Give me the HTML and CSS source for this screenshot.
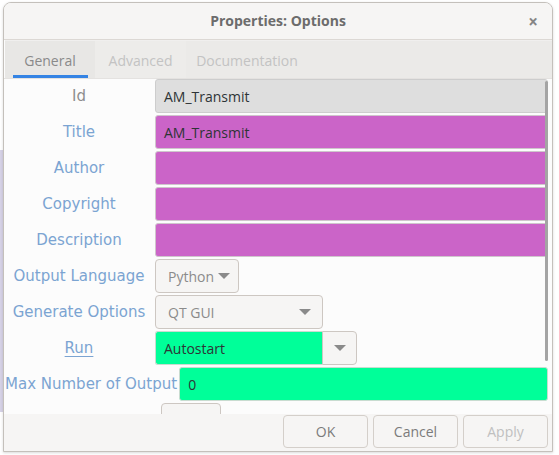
FILE: index.html
```html
<!DOCTYPE html>
<html>
<head>
<meta charset="utf-8">
<link rel="stylesheet" href="styles.css">
</head>
<body>
<div class="backdrop-strip"></div>
<div class="window">
  <div class="header">
    <div class="title">Properties: Options</div>
    <div class="close">×</div>
  </div>
  <div class="tabs">
    <div class="tab active">General</div>
    <div class="tab tab2">Advanced</div>
    <div class="tab">Documentation</div>
  </div>
  <div class="content">
    <div class="row"><div class="label grey">Id</div><div class="field idf">AM_Transmit</div></div>
    <div class="row"><div class="label">Title</div><div class="field mag">AM_Transmit</div></div>
    <div class="row"><div class="label">Author</div><div class="field mag"></div></div>
    <div class="row"><div class="label">Copyright</div><div class="field mag"></div></div>
    <div class="row"><div class="label">Description</div><div class="field mag"></div></div>
    <div class="row"><div class="label">Output Language</div><div class="combo lang">Python<span class="arrow"></span></div></div>
    <div class="row"><div class="label">Generate Options</div><div class="combo gen"><span>QT GUI</span><span class="arrow"></span></div></div>
    <div class="row"><div class="label"><u>Run</u></div><div class="run"><div class="field green runf">Autostart</div><div class="runbtn"><span class="arrow"></span></div></div></div>
    <div class="row"><div class="label wide">Max Number of Output</div><div class="field green">0</div></div>
    <div class="row"><div class="label"></div><div class="combo small"></div></div>
    <div class="scrollbar"></div>
  </div>
  <div class="footer">
    <div class="btn">OK</div>
    <div class="btn">Cancel</div>
    <div class="btn disabled">Apply</div>
  </div>
</div>
</body>
</html>
```
FILE: styles.css
```css
html, body {
  margin: 0;
  padding: 0;
  background: #ffffff;
  width: 559px;
  height: 455px;
  overflow: hidden;
}
body {
  position: relative;
  font-family: "Open Sans", "Noto Sans", sans-serif;
}
.backdrop-strip {
  position: absolute;
  left: 0;
  top: 150px;
  width: 3px;
  height: 262px;
  background: #d6d2e6;
}
.window {
  position: absolute;
  left: 3px;
  top: 2px;
  width: 548px;
  height: 448px;
  border: 1px solid #c4c0bb;
  border-radius: 8px 8px 0 0;
  background: #fcfcfc;
  display: flex;
  flex-direction: column;
  overflow: hidden;
  box-shadow: 0 1px 3px rgba(0,0,0,0.15);
}
.header {
  height: 36px;
  flex: none;
  background: #f6f5f4;
  border-bottom: 1px solid #dcd8d4;
  display: flex;
  align-items: center;
  justify-content: center;
  position: relative;
}
.title {
  font-weight: bold;
  font-size: 14px;
  color: #6c6c6c;
  margin-top: -1px;
}
.close {
  position: absolute;
  right: 14px;
  top: 7px;
  font-size: 17px;
  color: #858585;
  font-weight: bold;
}
.tabs {
  height: 37px;
  flex: none;
  background: #ebeae8;
  display: flex;
  margin-left: 1px;
  border-top: 1px solid #f0efee;
}
.tab {
  width: 90px;
  display: flex;
  align-items: center;
  justify-content: center;
  font-size: 14px;
  color: #c3c3c3;
  box-sizing: border-box;
  padding-top: 1px;
}
.tab:nth-child(3) { width: 122px; }
.tab.active {
  color: #8a8a8a;
  background: #e8e7e5;
  position: relative;
}
.tab.active::after {
  content: "";
  position: absolute;
  left: 8px;
  right: 7px;
  bottom: 0;
  height: 3px;
  background: #3584e4;
}
.tab2 { background: #edecea; width: 91px; }
.content {
  flex: 1;
  position: relative;
  background: #fcfcfc;
  padding: 0 4px 0 1px;
  display: flex;
  flex-direction: column;
  gap: 2px;
  overflow: hidden;
  border-top: 1px solid #e4e2e0;
}
.row {
  display: flex;
  gap: 2px;
  height: 34px;
  flex: none;
  align-items: stretch;
}
.label {
  width: 148px;
  flex: none;
  display: flex;
  align-items: center;
  justify-content: center;
  font-family: "DejaVu Sans", sans-serif;
  font-size: 15px;
  color: #7ba4d2;
  white-space: nowrap;
}
.label.grey { color: #8e8e8e; }
.label.wide { width: auto; }
.label u { text-decoration-thickness: 1px; text-underline-offset: 3px; }
.field {
  flex: 1;
  box-sizing: border-box;
  border: 1px solid #d2d0ce;
  border-radius: 3px;
  display: flex;
  align-items: center;
  padding-left: 8px;
  font-size: 14px;
  color: #2e3436;
}
.idf { background: #dedede; border-color: #cdcdcd; }
.mag { background: #cb64c8; border-color: #cfc6cc; }
.green { background: #00ff99; border-color: #c8dcd0; }
.combo {
  box-sizing: border-box;
  background: #f6f5f4;
  border: 1px solid #cdc7c2;
  border-radius: 4px;
  display: flex;
  align-items: center;
  font-size: 14px;
  color: #8b8b8b;
}
.arrow {
  display: inline-block;
  width: 0;
  height: 0;
  border-left: 6px solid transparent;
  border-right: 6px solid transparent;
  border-top: 6px solid #8a8a8a;
}
.lang { width: 84px; padding-left: 12px; gap: 4px; }
.gen { width: 168px; padding: 0 11px 0 12px; justify-content: space-between; }
.run { display: flex; width: 202px; }
.runf {
  flex: none;
  width: 167px;
  border-radius: 3px 0 0 3px;
  border-right: none;
}
.runbtn {
  flex: 1;
  box-sizing: border-box;
  background: #f6f5f4;
  border: 1px solid #cdc7c2;
  border-radius: 0 4px 4px 0;
  display: flex;
  align-items: center;
  justify-content: center;
}
.small { width: 60px; margin-left: 6px; }
.scrollbar {
  position: absolute;
  right: 4px;
  top: 2px;
  width: 3px;
  height: 280px;
  background: #a4a4a4;
  border-radius: 2px;
}
.footer {
  height: 37px;
  flex: none;
  background: #f6f5f4;
  display: flex;
  justify-content: flex-end;
  gap: 5px;
  padding: 1px 4px 0 0;
  box-sizing: border-box;
}
.btn {
  width: 85px;
  height: 33px;
  box-sizing: border-box;
  border: 1px solid #d4cfca;
  border-radius: 4px;
  background: #f6f5f4;
  display: flex;
  align-items: center;
  justify-content: center;
  font-size: 14px;
  color: #7b7b7b;
}
.btn.disabled { color: #c0c0c0; }
```
